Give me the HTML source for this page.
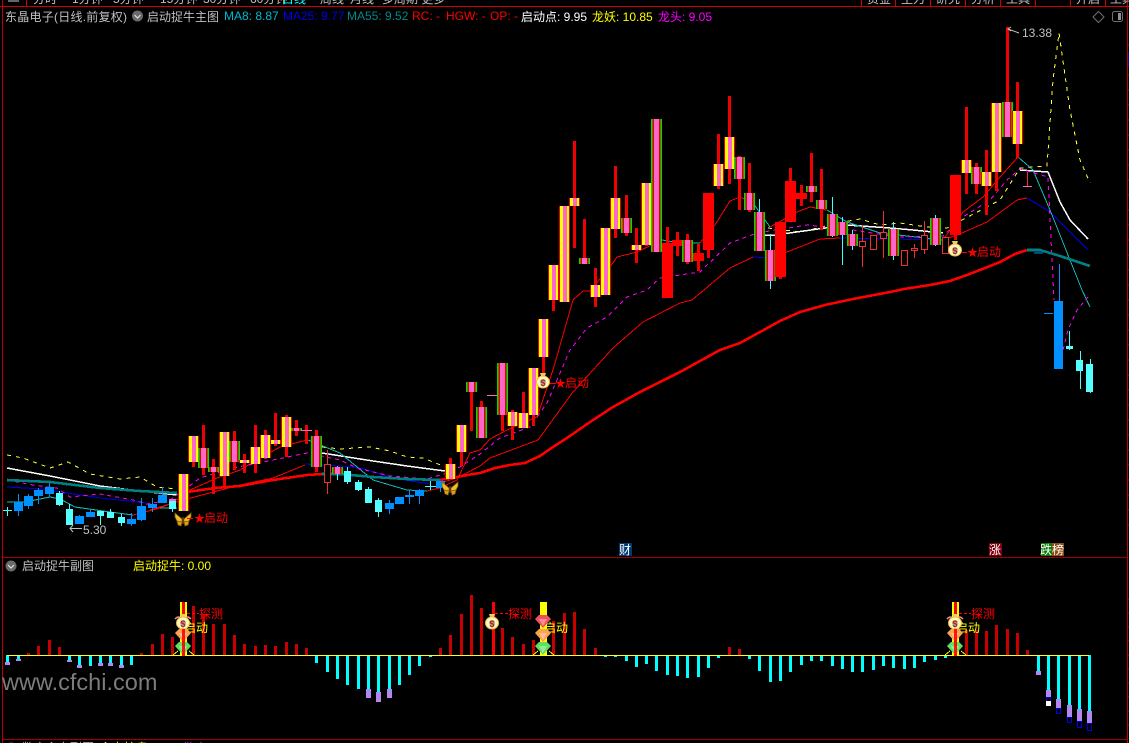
<!DOCTYPE html>
<html><head><meta charset="utf-8"><style>
html,body{margin:0;padding:0;background:#000;width:1129px;height:743px;overflow:hidden}
svg{display:block;position:absolute;left:0;top:0}
text{font-family:"Liberation Sans","WenQuanYi Zen Hei","Noto Sans CJK SC",sans-serif;font-size:12px}
.c{shape-rendering:crispEdges}
.n{fill:none}
.y{fill:url(#gy)}.g{fill:url(#gg)}
.b{fill:#0090ff}.a{fill:#55ffff}.r{fill:#f00}
.h{fill:#000;stroke:#f03030;stroke-width:1}
.p{fill:#b088f0}
.o{fill:#000;stroke:#0000e0;stroke-width:1}
</style></head><body>
<svg width="1129" height="743" viewBox="0 0 1129 743">
<defs>
<linearGradient id="gy"><stop offset=".09" stop-color="#e00000"/><stop offset=".09" stop-color="#ff0"/><stop offset=".36" stop-color="#ff0"/><stop offset=".36" stop-color="#ff66cc"/><stop offset=".73" stop-color="#ff66cc"/><stop offset=".73" stop-color="#ff0"/><stop offset=".91" stop-color="#ff0"/><stop offset=".91" stop-color="#e00000"/></linearGradient>
<linearGradient id="gg"><stop offset=".15" stop-color="#00e000"/><stop offset=".15" stop-color="#e00000"/><stop offset=".27" stop-color="#e00000"/><stop offset=".27" stop-color="#ff66cc"/><stop offset=".73" stop-color="#ff66cc"/><stop offset=".73" stop-color="#e00000"/><stop offset=".85" stop-color="#e00000"/><stop offset=".85" stop-color="#00e000"/></linearGradient>
<g id="fly"><path d="M-1 0L-8-6-8-2-6 2-1 3ZM1 0L8-6 8-2 6 2 1 3Z" fill="#f0c020" stroke="#8a5a10" stroke-width=".8"/><path d="M-1 3L-6 2-5 6-2 7ZM1 3L6 2 5 6 2 7Z" fill="#d8a018" stroke="#8a5a10" stroke-width=".8"/><path d="M0-2V5" stroke="#6a3a10" stroke-width="1.500"/></g>
<g id="bag"><path d="M-3-8H3L2-5H-2Z" fill="#e8d060"/><ellipse cx="0" cy="1" rx="6.500" ry="6" fill="#fff6c0" stroke="#e8c040"/><circle cx="0" cy="1" r="3" fill="#d8a080"/></g>
<g id="gem"><path d="M-8-3L-4-7H4L8-3 0 6Z"/><path d="M-4-3H4L0 4Z" fill="#fff" fill-opacity=".35"/></g>
</defs>

<!-- frame -->
<g class="c">
<rect x="0" y="6" width="1129" height="1" fill="#d00000"/>
<rect x="2" y="0" width="1" height="743" fill="#c00000"/>
<rect x="26" y="0" width="1" height="6" fill="#d00000"/>
<rect x="1127" y="0" width="1" height="743" fill="#c00000"/>
<rect x="3" y="557" width="1124" height="1" fill="#a00000"/>
<rect x="3" y="739" width="1124" height="1" fill="#a00000"/>
<rect x="8" y="0" width="11" height="2" fill="#666"/>
<path d="M861.500 0V6M895.500 0V6M930.500 0V6M965.500 0V6M1000.500 0V6M1035.500 0V6M1070.500 0V6M1105.500 0V6" stroke="#d00000" fill="none"/>
<path d="M1128 45h1M1128 60h1M1128 75h1M1128 90h1M1128 105h1M1128 120h1M1128 135h1M1128 150h1M1128 165h1M1128 180h1M1128 195h1M1128 210h1M1128 225h1M1128 240h1M1128 255h1M1128 270h1M1128 285h1M1128 300h1M1128 315h1M1128 330h1M1128 345h1M1128 360h1M1128 375h1M1128 390h1M1128 405h1M1128 420h1M1128 435h1M1128 450h1M1128 465h1M1128 480h1M1128 495h1M1128 510h1M1128 525h1M1128 599h1M1128 613h1M1128 627h1M1128 641h1M1128 655h1M1128 669h1M1128 683h1M1128 697h1M1128 711h1M1128 725h1" stroke="#c00000"/>
<rect x="1128" y="52" width="1" height="15" fill="#0000c0"/>
</g>

<!-- clipped tab text -->
<g fill="#c0c0c0">
<text x="33" y="3">分时</text><text x="72" y="3">1分钟</text><text x="113" y="3">5分钟</text><text x="160" y="3">15分钟</text><text x="203" y="3">30分钟</text><text x="250" y="3">60分钟</text>
<text x="282" y="3" fill="#00ffff">日线</text><text x="320" y="3">周线</text><text x="350" y="3">月线</text><text x="382" y="3">多周期 更多</text>
<text x="867" y="3">资金</text><text x="901" y="3">主力</text><text x="936" y="3">研究</text><text x="971" y="3">分析</text><text x="1006" y="3">工具</text><text x="1076" y="3">开启</text><text x="1110" y="3">工具</text>
</g>

<!-- header -->
<text x="5" y="21" fill="#c0c0c0" textLength="122" lengthAdjust="spacing">东晶电子(日线.前复权)</text>
<circle cx="137.500" cy="16" r="5.500" fill="#6a6a6a"/><path d="M134.500 15l3 3 3-3" fill="none" stroke="#e0e0e0" stroke-width="1.200"/>
<text x="147" y="21" fill="#c0c0c0">启动捉牛主图</text>
<text x="224" y="20" fill="#00b8d0">MA8: 8.87</text>
<text x="283" y="20" fill="#0000e8">MA25: 9.77</text>
<text x="347" y="20" fill="#008888">MA55: 9.52</text>
<text x="412" y="20" fill="#f00">RC: -</text>
<text x="446" y="20" fill="#f00">HGW: -</text>
<text x="490" y="20" fill="#f00">OP: -</text>
<text x="521" y="21" fill="#fff">启动点: 9.95</text>
<text x="592" y="21" fill="#ff0">龙妖: 10.85</text>
<text x="658" y="21" fill="#f0f">龙头: 9.05</text>
<path d="M1098.500 11.500l5.500 5.500-5.500 5.500-5.500-5.500z" fill="none" stroke="#707070"/>
<rect x="1112.500" y="11.500" width="10" height="10" rx="2" fill="none" stroke="#707070"/><rect x="1118" y="13" width="3" height="7" fill="#909090"/>

<!-- main lines -->
<g class="c n">
<polyline stroke="#ffff30" stroke-dasharray="4 5" points="7,455 23,458 50,468 68,462 90,474 120,479 140,477 157,487 177,489"/>
<polyline stroke="#ffff30" stroke-dasharray="4 5" points="322,447 340,449 370,447 390,451 407,457 423,458 443,466"/>
<polyline stroke="#ffff30" stroke-dasharray="4 5" points="768,228 800,232 843,222 860,219 880,225 900,223 927,227 947,228 1000,200 1020,168 1047,166 1053,80 1059,33 1070,110 1080,160 1090,183"/>
<polyline stroke="#fff" stroke-width="1.500" points="7,468 50,476 100,486 140,491 177,495"/>
<polyline stroke="#fff" stroke-width="1.500" points="322,453 373,461 407,466 445,471"/>
<polyline stroke="#fff" stroke-width="1.500" points="764,235 775,235 847,225 890,228 913,230 943,233"/>
<polyline stroke="#fff" stroke-width="1.500" points="1020,170 1048,172 1060,202 1070,220 1088,239"/>
<polyline stroke="#0000e8" points="7,487 43,489 67,493 100,498 147,503"/>
<polyline stroke="#0000e8" points="305,464 340,466 360,468 393,478 430,484"/>
<polyline stroke="#0000e8" points="753,257 770,258"/>
<polyline stroke="#0000e8" points="840,238 890,239 943,240"/>
<polyline stroke="#0000e8" points="1027,198 1050,212 1088,250"/>
<polyline stroke="#0090ff" points="1034,253 1043,253"/>
<polyline stroke="#f00" points="150,510 183,500 240,485 273,478 305,465"/>
<polyline stroke="#f00" points="440,483 457,478 480,466 490,458 538,440 573,392 613,348 643,322 680,303 692,300 730,268 753,257"/>
<polyline stroke="#f00" points="770,258 787,252 820,239 840,238"/>
<polyline stroke="#f00" points="943,240 962,233 987,222 1017,200 1027,198"/>
<polyline stroke="#f00" points="133,515 160,508 172,503 190,490 217,478 240,470 260,458 280,447 307,440"/>
<polyline stroke="#f00" points="427,491 440,488 457,480 470,453 480,450 490,439 507,430 537,417 553,370 573,300 583,291 590,291 610,267 617,257 637,252 662,240"/>
<polyline stroke="#f00" points="700,243 715,225 730,201 740,197 753,203"/>
<polyline stroke="#f00" points="770,227 797,212 810,207 827,210"/>
<polyline stroke="#f00" points="943,240 963,212 983,197 1000,177 1018,157"/>
<polyline stroke="#18b8b8" points="7,502 25,502 50,497 60,499 75,507 110,512 133,515"/>
<polyline stroke="#18b8b8" points="160,508 177,508"/>
<polyline stroke="#18b8b8" points="308,440 340,453 373,480 407,490 427,491"/>
<polyline stroke="#18b8b8" points="662,240 680,243 700,243"/>
<polyline stroke="#18b8b8" points="753,203 770,227"/>
<polyline stroke="#18b8b8" points="827,210 847,222 880,233 943,240"/>
<polyline stroke="#18b8b8" points="1018,157 1033,170 1050,210 1082,290 1090,307"/>
<polyline stroke="#f0f" stroke-dasharray="4 4" points="7,480 33,485 57,488 70,497 100,494 133,500 147,504 170,500 200,478 233,468 273,460 307,453 340,460 357,468 390,476 427,479 447,473 460,467 480,454 500,438 530,427 547,403 570,350 587,328 607,317 627,297 647,290 660,278 680,275 700,272 730,243 757,233 807,225 853,230 897,237 943,236 963,217 990,200 1007,180 1020,169 1048,177 1054,300"/>
<polyline stroke="#f0f" stroke-dasharray="4 4" points="1063,350 1068,330 1077,310 1088,297"/>
<polyline stroke="#f00" stroke-width="2.600" points="187,492 215,488 240,486 273,480 307,475 322,474"/>
<polyline stroke="#f00" stroke-width="2.600" points="440,480 457,477 473,474 480,473 495,468 510,465 525,463 540,456 553,447 567,438 590,422 613,407 640,392 660,382 680,372 720,350 740,343 760,332 780,321 800,312 825,305 853,299 890,292 904,289 930,285 950,281 967,275 985,268 1000,262 1015,254 1027,250"/>
<polyline stroke="#008080" stroke-width="2.600" points="7,480 50,482 100,488 140,491 177,493"/>
<polyline stroke="#008080" stroke-width="2.600" points="322,474 340,474 373,477 407,479 440,480"/>
<polyline stroke="#008080" stroke-width="2.600" points="1027,250 1040,250 1060,256 1090,266"/>
</g>

<!-- wicks -->
<g class="c n">
<path stroke="#f00000" stroke-width="3" d="M193.500 436V467M203.500 425V475M213.500 459V494M224.500 432V486M234.500 431V470M244.500 454V473M255.500 425V473M265.500 430V459M275.500 413V446M286.500 415V457M296.500 420V436M306.500 425V444M316.500 430V472M450.500 458V479M461.500 425V466M471.500 382V431M481.500 401V438M502.500 363V431M512.500 410V440M523.500 392V428M533.500 368V426M543.500 319V380M553.500 265V311M564.500 206V302M574.500 141V248M584.500 219V264M595.500 268V307M605.500 228V295M615.500 166V238M626.500 195V236M636.500 228V263M646.500 183V246M656.500 119V252M667.500 227V298M677.500 232V256M687.500 234V264M698.500 244V271M708.500 193V258M718.500 134V189M729.500 96V184M739.500 156V210M749.500 163V212M780.500 222V279M790.500 168V222M801.500 185V206M811.500 153V202M821.500 169V230M955.500 175V240M966.500 107V194M976.500 163V194M986.500 150V215M996.500 103V191M1007.500 27V137M1017.500 82V158"/>
<path stroke="#f03030" d="M1027.500 172V186M862.500 225V267M883.500 211V258M914.500 244V258M924.500 221V254M327.500 450V494"/>
<path stroke="#40ffff" d="M7.500 507V516M3 510.500H12M59.500 491V506M69.500 504V525M100.500 511V525M110.500 509V518M121.500 514V526M172.500 499V512M337.500 466V480M347.500 467V484M358.500 480V491M368.500 487V503M378.500 498V517M430.500 481V490M425 486.500H436M759.500 199V251M770.500 234V289M832.500 197V237M842.500 217V265M852.500 230V250M893.500 222V260M935.500 215V246M1069.500 331V350M1080.500 351V389M1090.500 359V393"/>
<path stroke="#0090ff" d="M18.500 494V516M28.500 494V509M38.500 488V504M49.500 483V497M79.500 515V524M90.500 510V517M131.500 513V526M141.500 498V521M152.500 498V512M162.500 487V503M389.500 500V514M399.500 497V504M409.500 490V504M419.500 489V504M440.500 481V492M1059.500 264V369M1044 313.500H1053"/>
</g>

<!-- bodies -->
<g class="c">
<rect class="b" x="14" y="502" width="9" height="9"/><rect class="b" x="24" y="496" width="9" height="10"/><rect class="b" x="34" y="490" width="9" height="6"/><rect class="b" x="45" y="487" width="9" height="7"/>
<rect class="a" x="56" y="493" width="7" height="12"/><rect class="a" x="66" y="509" width="7" height="16"/>
<rect class="b" x="75" y="516" width="9" height="8"/><rect class="b" x="86" y="512" width="9" height="5"/>
<rect class="a" x="97" y="511" width="7" height="5"/><rect class="a" x="107" y="512" width="7" height="6"/><rect class="a" x="118" y="517" width="7" height="6"/>
<rect class="b" x="127" y="519" width="9" height="5"/><rect class="b" x="137" y="506" width="9" height="14"/><rect class="b" x="148" y="504" width="9" height="4"/><rect class="b" x="158" y="495" width="9" height="8"/>
<rect class="a" x="169" y="499" width="7" height="10"/><rect x="169" y="499" width="7" height="2" fill="#ff66cc"/>
<rect class="y" x="178" y="474" width="11" height="37"/><rect class="y" x="188" y="436" width="11" height="26"/><rect class="g" x="198" y="448" width="11" height="20"/><rect class="g" x="208" y="467" width="11" height="5"/>
<rect class="y" x="219" y="432" width="11" height="44"/><rect class="g" x="229" y="441" width="11" height="21"/><rect class="y" x="239" y="460" width="11" height="3"/><rect class="y" x="250" y="447" width="11" height="17"/>
<rect class="y" x="260" y="435" width="11" height="23"/><rect class="y" x="270" y="440" width="11" height="4"/><rect class="y" x="281" y="417" width="11" height="30"/><rect class="g" x="291" y="428" width="11" height="3"/>
<rect x="301" y="430" width="11" height="1" fill="#ff66cc"/><rect class="g" x="311" y="436" width="11" height="31"/>
<rect class="h" x="324.500" y="464.500" width="6" height="18"/>
<rect class="g" x="332" y="467" width="11" height="7"/>
<rect class="a" x="344" y="471" width="7" height="11"/><rect class="a" x="355" y="482" width="7" height="8"/><rect class="a" x="365" y="489" width="7" height="14"/><rect class="a" x="375" y="500" width="7" height="12"/>
<rect class="b" x="385" y="503" width="9" height="6"/><rect class="b" x="395" y="497" width="9" height="7"/><rect class="b" x="405" y="495" width="9" height="2"/><rect class="b" x="415" y="490" width="9" height="6"/><rect class="b" x="436" y="481" width="9" height="7"/>
<rect class="y" x="445" y="464" width="11" height="15"/><rect class="y" x="456" y="425" width="11" height="27"/><rect class="g" x="466" y="382" width="11" height="10"/><rect class="g" x="476" y="407" width="11" height="31"/>
<rect x="487" y="395" width="10" height="1" fill="#ff66cc"/>
<rect class="g" x="497" y="363" width="11" height="52"/><rect class="y" x="507" y="412" width="11" height="14"/><rect class="y" x="518" y="413" width="11" height="15"/><rect class="y" x="528" y="368" width="11" height="47"/><rect class="y" x="538" y="319" width="11" height="38"/><rect class="y" x="548" y="265" width="11" height="35"/><rect class="y" x="559" y="206" width="11" height="96"/><rect class="y" x="569" y="198" width="11" height="8"/><rect class="g" x="579" y="258" width="11" height="6"/><rect class="y" x="590" y="285" width="11" height="12"/><rect class="y" x="600" y="228" width="11" height="67"/><rect class="y" x="610" y="198" width="11" height="31"/><rect class="g" x="621" y="218" width="11" height="15"/><rect class="y" x="631" y="245" width="11" height="5"/><rect class="y" x="641" y="183" width="11" height="62"/><rect class="g" x="651" y="119" width="11" height="133"/>
<rect class="r" x="662" y="243" width="11" height="55"/><rect class="r" x="672" y="240" width="11" height="6"/><rect class="g" x="682" y="240" width="11" height="22"/><rect class="r" x="693" y="253" width="11" height="8"/><rect class="r" x="703" y="193" width="11" height="57"/>
<rect class="y" x="713" y="164" width="11" height="22"/><rect class="y" x="724" y="137" width="11" height="32"/><rect class="g" x="734" y="157" width="11" height="22"/><rect class="g" x="744" y="193" width="11" height="17"/><rect class="g" x="754" y="212" width="11" height="39"/><rect class="g" x="765" y="250" width="11" height="31"/>
<rect class="r" x="775" y="222" width="11" height="55"/><rect class="r" x="785" y="181" width="11" height="41"/><rect class="r" x="796" y="193" width="11" height="6"/>
<rect class="g" x="806" y="186" width="11" height="6"/><rect class="g" x="816" y="200" width="11" height="9"/><rect class="g" x="827" y="214" width="11" height="22"/><rect class="g" x="837" y="222" width="11" height="13"/><rect class="g" x="847" y="234" width="11" height="12"/>
<rect class="h" x="859.500" y="241.500" width="6" height="5"/><rect class="h" x="870.500" y="235.500" width="6" height="14"/><rect class="h" x="880.500" y="232.500" width="6" height="6"/>
<rect class="g" x="888" y="229" width="11" height="27"/>
<rect class="h" x="901.500" y="250.500" width="6" height="15"/><rect class="h" x="911.500" y="248.500" width="6" height="2"/><rect class="h" x="921.500" y="235.500" width="6" height="14"/>
<rect class="g" x="930" y="218" width="11" height="27"/>
<rect class="h" x="942.500" y="237.500" width="6" height="16"/>
<rect class="r" x="950" y="175" width="11" height="60"/>
<rect class="y" x="961" y="160" width="11" height="13"/><rect class="g" x="971" y="167" width="11" height="17"/><rect class="y" x="981" y="172" width="11" height="14"/><rect class="y" x="991" y="103" width="11" height="69"/><rect class="g" x="1002" y="102" width="11" height="35"/><rect class="y" x="1012" y="111" width="11" height="33"/>
<rect x="1023" y="186" width="9" height="1" fill="#ff66cc"/>
<rect class="b" x="1054" y="301" width="9" height="68"/>
<rect class="a" x="1066" y="346" width="7" height="3"/><rect class="a" x="1076" y="360" width="7" height="11"/><rect class="a" x="1086" y="364" width="7" height="28"/>
</g>

<!-- main markers -->
<use href="#fly" x="183" y="519"/><use href="#fly" x="450" y="488"/>
<use href="#bag" x="543" y="381"/><use href="#bag" x="955" y="249"/>
<g fill="#8a3030" font-weight="700"><text x="540.500" y="386" style="font-size:9px">$</text><text x="952.500" y="254" style="font-size:9px">$</text></g>
<g class="c" fill="#f00"><rect x="187" y="518" width="6" height="1"/><rect x="550" y="383" width="6" height="1"/><rect x="961" y="252" width="6" height="1"/></g>
<g fill="#f00">
<text x="194" y="522" style="font-size:11px">★</text><text x="204" y="522">启动</text>
<text x="555" y="387" style="font-size:11px">★</text><text x="565" y="387">启动</text>
<text x="967" y="256" style="font-size:11px">★</text><text x="977" y="256">启动</text>
</g>
<g fill="#c0c0c0">
<text x="83" y="534">5.30</text><text x="1022" y="37">13.38</text>
</g>
<path d="M82 528.500H70M73 525l-3 3.500 3 3.500M1019 33L1008 29M1011 27l-3 2 3 2" fill="none" stroke="#c0c0c0"/>

<!-- tags -->
<g class="c"><rect x="619" y="543" width="13" height="13" fill="#003a70"/><rect x="989" y="543" width="13" height="13" fill="#800010"/><rect x="1041" y="543" width="11" height="13" fill="#0a7a0a"/><rect x="1052" y="543" width="12" height="13" fill="#8a4a10"/></g>
<g fill="#fff"><text x="619" y="554">财</text><text x="989" y="554">涨</text><text x="1040" y="554">跌</text><text x="1052" y="554">榜</text></g>

<!-- sub header -->
<circle cx="11" cy="566" r="5.500" fill="#6a6a6a"/><path d="M8 565l3 3 3-3" fill="none" stroke="#e0e0e0" stroke-width="1.200"/>
<text x="22" y="570" fill="#c0c0c0">启动捉牛副图</text>
<text x="133" y="570" fill="#ff0">启动捉牛: 0.00</text>

<!-- sub bars -->
<g class="c n">
<path stroke="#c80000" stroke-width="3" d="M28.500 655V653M38.500 655V646M49.500 655V640M59.500 655V647M141.500 655V653M152.500 655V644M162.500 655V634M172.500 655V637M193.500 655V606M203.500 655V614M213.500 655V624M224.500 655V624M234.500 655V635M244.500 655V644M255.500 655V646M265.500 655V645M275.500 655V646M286.500 655V642M296.500 655V644M306.500 655V648M440.500 655V648M450.500 655V635M461.500 655V614M471.500 655V595M481.500 655V608M502.500 655V628M512.500 655V637M523.500 655V644M533.500 655V640M553.500 655V621M564.500 655V613M574.500 655V612M584.500 655V629M595.500 655V648M729.500 655V647M739.500 655V649M966.500 655V630M976.500 655V630M986.500 655V631M996.500 655V625M1007.500 655V629M1017.500 655V633M1027.500 655V650"/>
<path stroke="#00ffff" stroke-width="3" d="M7.500 655V662M18.500 655V659M69.500 655V660M79.500 655V665M90.500 655V666M100.500 655V663M110.500 655V663M121.500 655V665M131.500 655V665M316.500 655V663M327.500 655V672M337.500 655V679M347.500 655V685M358.500 655V689M368.500 655V689M378.500 655V692M389.500 655V689M399.500 655V685M409.500 655V675M419.500 655V666M430.500 655V657M605.500 655V657M615.500 655V657M626.500 655V661M636.500 655V667M646.500 655V664M656.500 655V671M667.500 655V675M677.500 655V676M687.500 655V678M698.500 655V677M708.500 655V668M718.500 655V658M749.500 655V659M759.500 655V671M770.500 655V682M780.500 655V681M790.500 655V672M801.500 655V665M811.500 655V661M821.500 655V661M832.500 655V666M842.500 655V669M852.500 655V672M862.500 655V672M873.500 655V670M883.500 655V666M893.500 655V668M904.500 655V669M914.500 655V668M924.500 655V662M935.500 655V660M945.500 655V658M1038.500 655V671M1048.500 655V690M1058.500 655V699M1069.500 655V705M1079.500 655V709M1089.500 655V711"/>
</g>
<g class="c">
<rect class="p" x="5" y="662" width="5" height="3"/><rect class="p" x="16" y="659" width="5" height="2"/><rect class="p" x="67" y="660" width="5" height="2"/><rect class="p" x="77" y="665" width="5" height="3"/><rect class="p" x="98" y="663" width="5" height="3"/><rect class="p" x="108" y="663" width="5" height="3"/><rect class="p" x="119" y="665" width="5" height="3"/>
<rect class="p" x="366" y="689" width="5" height="9"/><rect class="p" x="376" y="692" width="5" height="10"/><rect class="p" x="387" y="689" width="5" height="9"/>
<rect class="p" x="1036" y="671" width="5" height="4"/><rect class="p" x="1046" y="690" width="5" height="7"/><rect class="p" x="1056" y="699" width="5" height="9"/><rect class="p" x="1067" y="705" width="5" height="12"/><rect class="p" x="1077" y="709" width="5" height="12"/><rect class="p" x="1087" y="711" width="5" height="12"/>
<rect class="o" x="1046.500" y="697.500" width="4" height="4"/><rect x="1046" y="701" width="5" height="5" fill="#fff"/>
<rect class="o" x="1056.500" y="708.500" width="4" height="5"/><rect class="o" x="1067.500" y="717.500" width="4" height="5"/><rect class="o" x="1077.500" y="721.500" width="4" height="6"/><rect class="o" x="1087.500" y="723.500" width="4" height="7"/>
<!-- signal columns -->
<rect x="180" y="602" width="7" height="54" fill="#ff0"/><rect x="182" y="602" width="3" height="54" fill="#f00"/>
<rect x="540" y="602" width="7" height="54" fill="#ff0"/>
<rect x="952" y="602" width="7" height="54" fill="#ff0"/><rect x="954" y="602" width="3" height="54" fill="#f00"/>
<rect x="492" y="602" width="3" height="54" fill="#f00"/>
</g>
<g class="c" fill="none" stroke="#ff0"><path d="M173 655L178 651M189 651L194 655M533 655L538 651M549 651L554 655M945 655L950 651M961 651L966 655"/></g>
<rect class="c" x="7" y="655" width="1082" height="1" fill="#ffff20"/>

<!-- sub markers -->
<g fill="#ff0"><text x="184" y="632">启动</text><text x="544" y="632">启动</text><text x="956" y="632">启动</text></g>
<g fill="#f00"><text x="199" y="618">探测</text><text x="508" y="618">探测</text><text x="971" y="618">探测</text></g>
<g stroke="#f00" stroke-dasharray="3 2"><path d="M187 613.500H199M495 613.500H508M959 613.500H971"/></g>
<path d="M175 619q4-4 6 0M191 619q-4-4-6 0M947 619q4-4 6 0M963 619q-4-4-6 0" fill="none" stroke="#f09090" stroke-width="1.500"/>
<use href="#bag" x="183" y="622"/><use href="#bag" x="492" y="622"/><use href="#bag" x="955" y="622"/>
<g fill="#8a3030" font-weight="700"><text x="180.500" y="627" style="font-size:9px">$</text><text x="489.500" y="627" style="font-size:9px">$</text><text x="952.500" y="627" style="font-size:9px">$</text></g>
<g fill="#ffa050"><use href="#gem" x="183" y="636"/><use href="#gem" x="543" y="636"/><use href="#gem" x="955" y="636"/></g>
<g fill="#60e060"><use href="#gem" x="183" y="649"/><use href="#gem" x="543" y="649"/><use href="#gem" x="955" y="649"/></g>
<g fill="#f05060"><use href="#gem" x="543" y="622"/></g>
<g class="c"><rect x="182" y="629" width="3" height="27" fill="#f00" fill-opacity=".9"/><rect x="954" y="629" width="3" height="27" fill="#f00" fill-opacity=".9"/></g>

<!-- watermark -->
<text x="2" y="690" fill="#7c7c7c" style="font-size:23.500px">www.cfchi.com</text>

<!-- bottom clipped panel header -->
<circle cx="11" cy="748" r="5.500" fill="#6a6a6a"/>
<text x="22" y="752" fill="#c0c0c0">数字主力副图</text>
<text x="100" y="752" fill="#ff0">主力控盘</text>
<text x="183" y="752" fill="#f0f">散户</text>
</svg>
</body></html>
